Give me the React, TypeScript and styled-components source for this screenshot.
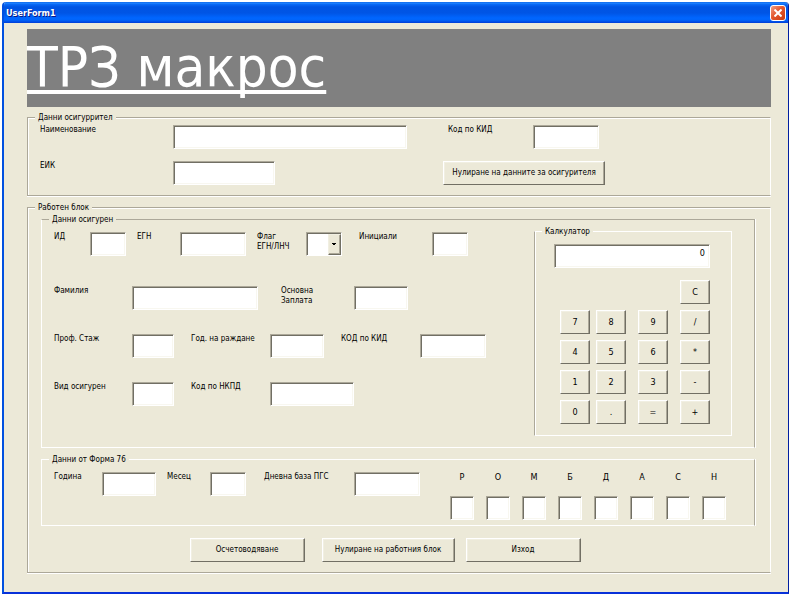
import React from "react";
import styled, { createGlobalStyle } from "styled-components";

const face = "#ece9d8";
const shade = "#aca899";
const dark = "#716f64";

const GlobalStyle = createGlobalStyle`
  * { box-sizing: border-box; }
  body { margin: 0; background: #fff; }
  body, button, input, select {
    font-family: "DejaVu Sans Condensed", "DejaVu Sans", sans-serif;
    font-stretch: condensed;
    font-size: 8px;
    line-height: 10px;
    color: #000;
  }
`;

const Page = styled.div`
  padding: 2px 0 1px 2px;
`;

const Window = styled.div`
  border: solid;
  border-width: 0 1px 2px 2px;
  border-color: #0831d9 #001ea0 #0831d9 #0050e0;
  border-radius: 4px 4px 0 0;
  background: ${face};
  overflow: hidden;
`;

const TitleBar = styled.header`
  display: flex;
  align-items: center;
  justify-content: space-between;
  height: 21px;
  padding: 0 2px;
  background: linear-gradient(#0058e6 0, #2a8dff 1px, #0a6cf8 2px, #0054e3 5px, #0055e5 11px, #0066ff 16px, #0064fa 18px, #003dd7 21px);
`;

const Caption = styled.span`
  font-weight: bold;
  font-size: 9px;
  color: #fff;
  text-shadow: 1px 1px #0a1883;
`;

const CloseButton = styled.button`
  display: grid;
  place-items: center;
  width: 16px;
  height: 16px;
  padding: 0;
  border: 1px solid #fff;
  border-radius: 3px;
  background: linear-gradient(135deg, #f0a088, #e4572e 45%, #c83a10);
`;

const Body = styled.main`
  padding: 6px 17px 19px 23px;
`;

const Banner = styled.h1`
  height: 78px;
  margin: 0 0 10px;
  background: #808080;
  color: #fff;
  font-size: 56px;
  line-height: 76px;
  font-weight: normal;
  text-decoration: underline;
  text-decoration-thickness: 4px;
  text-underline-offset: 4px;
  text-decoration-skip-ink: none;
  white-space: nowrap;
`;

const Frame = styled.fieldset`
  position: relative;
  min-width: 0;
  margin: 0;
  padding: 0;
  border: 1px solid;
  border-color: ${shade} #fff ${shade} ${shade};
  box-shadow: inset 1px 1px #fff, 0 1px #fff;
`;

const Legend = styled.legend`
  position: absolute;
  top: -5px;
  left: 7px;
  padding: 0 3px;
  background: ${face};
  white-space: nowrap;
`;

const EmployerFrame = styled(Frame)`
  display: grid;
  grid-template-columns: 133px 270px 90px 1fr;
  row-gap: 12px;
  padding: 7px 12px 10px;
  margin-bottom: 11px;
`;

const WorkFrame = styled(Frame)`
  padding: 11px 15px 10px 13px;
`;

const PersonFrame = styled(Frame)`
  display: flex;
  justify-content: space-between;
  padding: 11px 22px 11px 12px;
  margin-bottom: 11px;
  border-color: ${shade} ${shade} #fff #fff;
  box-shadow: 1px 0 #fff;
`;

const FormFrame = styled(Frame)`
  display: flex;
  padding: 12px 28px 5px 12px;
  margin-bottom: 12px;
  border-color: #fff ${shade} #fff #fff;
  box-shadow: 1px 0 #fff;
`;

const CalcFrame = styled(Frame)`
  align-self: flex-start;
  padding: 12px 21px 11px 19px;
  border-color: #fff #fff #fff ${shade};
  box-shadow: inset 1px 0 #fff;
`;

const Label = styled.label<{ $width?: number; $indent?: number }>`
  flex: none;
  width: ${(p) => (p.$width ? `${p.$width}px` : "auto")};
  padding-left: ${(p) => p.$indent ?? 0}px;
  white-space: pre-line;
`;

const TextBox = styled.input<{ $width: number }>`
  flex: none;
  width: ${(p) => p.$width}px;
  height: 24px;
  padding: 2px 4px;
  border: 1px solid;
  border-color: ${shade} #fff #fff ${shade};
  border-radius: 0;
  background: #fff;
  box-shadow: inset 1px 1px ${dark}, inset -1px -1px #f8f7f0;
  outline: none;
`;

const Combo = styled.div`
  display: flex;
  position: relative;
  width: 36px;
  height: 24px;
`;

const Select = styled.select`
  appearance: none;
  width: 100%;
  height: 100%;
  padding: 2px;
  border: 1px solid;
  border-color: ${shade} #fff #fff ${shade};
  border-radius: 0;
  background: #fff;
  box-shadow: inset 1px 1px ${dark};
  outline: none;
`;

const ComboArrow = styled.span`
  position: absolute;
  top: 2px;
  right: 1px;
  bottom: 1px;
  display: grid;
  place-items: center;
  width: 13px;
  border: 1px solid;
  border-color: #f1efe2 ${dark} ${dark} #f1efe2;
  background: ${face};
  box-shadow: inset -1px -1px ${shade};
  pointer-events: none;
`;

const PushButton = styled.button<{ $width: number }>`
  width: ${(p) => p.$width}px;
  height: 24px;
  padding: 0;
  border: 1px solid;
  border-color: #fff ${dark} ${dark} #fff;
  border-radius: 0;
  background: ${face};
  box-shadow: inset -1px 0 ${shade}, inset 1px 1px #f1efe2;
  white-space: nowrap;
`;

const WideButton = styled(PushButton)`
  grid-column: 3 / span 2;
`;

const Rows = styled.div`
  display: grid;
  align-content: start;
  row-gap: 24px;
  padding-top: 1px;
`;

const Row = styled.div<{ $after?: number }>`
  display: flex;
  margin-bottom: ${(p) => p.$after ?? 0}px;
`;

const Pair = styled.div<{ $lead?: number }>`
  display: flex;
  margin-left: ${(p) => p.$lead ?? 0}px;
`;

const Display = styled(TextBox)`
  display: block;
  margin-bottom: 12px;
  padding: 3px 4px 9px;
  font-size: 9px;
  text-align: right;
`;

const Keys = styled.div`
  display: grid;
  grid-template-columns: 36px 42px 42px 30px;
  row-gap: 6px;
  margin-left: 6px;
`;

const Key = styled(PushButton)`
  font-size: 9px;
`;

const ClearKey = styled(Key)`
  grid-column: 4;
`;

const DayGrid = styled.div`
  display: flex;
  gap: 12px;
  margin-left: auto;
`;

const Day = styled.label`
  display: grid;
  grid-template-rows: 24px 24px;
  justify-items: center;
  font-size: 9px;
`;

const Actions = styled.div`
  display: flex;
  justify-content: center;
  padding-right: 26px;
`;

const ActionButton = styled(PushButton)<{ $lead?: number }>`
  margin-left: ${(p) => p.$lead ?? 0}px;
`;

type FieldSpec = {
  id: string;
  text: string;
  label: number;
  width: number;
  lead?: number;
  combo?: boolean;
};

const personRows: FieldSpec[][] = [
  [
    { id: "pid", text: "ИД", label: 36, width: 36 },
    { id: "egn", text: "ЕГН", label: 43, width: 66, lead: 11 },
    { id: "flag", text: "Флаг\nЕГН/ЛНЧ", label: 49, width: 36, lead: 11, combo: true },
    { id: "initials", text: "Инициали", label: 73, width: 36, lead: 17 },
  ],
  [
    { id: "family", text: "Фамилия", label: 78, width: 126 },
    { id: "salary", text: "Основна\nЗаплата", label: 73, width: 54, lead: 23 },
  ],
  [
    { id: "service", text: "Проф. Стаж", label: 78, width: 42 },
    { id: "birth", text: "Год. на раждане", label: 79, width: 54, lead: 17 },
    { id: "kid", text: "КОД по КИД", label: 79, width: 66, lead: 17 },
  ],
  [
    { id: "kind", text: "Вид осигурен", label: 78, width: 42 },
    { id: "nkpd", text: "Код по НКПД", label: 79, width: 84, lead: 17 },
  ],
];

const formFields: FieldSpec[] = [
  { id: "year", text: "Година", label: 48, width: 54 },
  { id: "month", text: "Месец", label: 43, width: 36, lead: 11 },
  { id: "base", text: "Дневна база ПГС", label: 90, width: 66, lead: 18 },
];

const keys = ["7", "8", "9", "/", "4", "5", "6", "*", "1", "2", "3", "-", "0", ".", "=", "+"];
const days = ["Р", "О", "М", "Б", "Д", "А", "С", "Н"];

function Field({ id, text, label, width, lead, combo }: FieldSpec) {
  return (
    <Pair $lead={lead}>
      <Label htmlFor={id} $width={label}>{text}</Label>
      {combo ? (
        <Combo>
          <Select id={id} defaultValue="">
            <option value="" />
          </Select>
          <ComboArrow>
            <svg width="5" height="3" viewBox="0 0 5 3" shapeRendering="crispEdges">
              <path d="M0 0h4v1H3v1H1V1H0z" />
            </svg>
          </ComboArrow>
        </Combo>
      ) : (
        <TextBox id={id} $width={width} />
      )}
    </Pair>
  );
}

export default function App() {
  return (
    <Page>
      <GlobalStyle />
      <Window>
        <TitleBar>
          <Caption>UserForm1</Caption>
          <CloseButton aria-label="Close">
            <svg width="8" height="8" viewBox="0 0 8 8">
              <path d="M0.5 0.5l7 7M7.5 0.5l-7 7" stroke="#fff" strokeWidth="2" />
            </svg>
          </CloseButton>
        </TitleBar>
        <Body>
          <Banner>ТРЗ макрос</Banner>
          <EmployerFrame>
            <Legend>Данни осигуррител</Legend>
            <Label htmlFor="name">Наименование</Label>
            <TextBox id="name" $width={234} />
            <Label htmlFor="kid-code" $indent={5}>Код по КИД</Label>
            <TextBox id="kid-code" $width={66} />
            <Label htmlFor="eik">ЕИК</Label>
            <TextBox id="eik" $width={102} />
            <WideButton $width={162}>Нулиране на данните за осигурителя</WideButton>
          </EmployerFrame>
          <WorkFrame>
            <Legend>Работен блок</Legend>
            <PersonFrame>
              <Legend>Данни осигурен</Legend>
              <Rows>
                {personRows.map((row, i) => (
                  <Row key={row[0].id} $after={i === 0 ? 6 : 0}>
                    {row.map((f) => <Field key={f.id} {...f} />)}
                  </Row>
                ))}
              </Rows>
              <CalcFrame>
                <Legend>Калкулатор</Legend>
                <Display aria-label="Калкулатор" $width={156} defaultValue="0" />
                <Keys>
                  <ClearKey $width={30}>C</ClearKey>
                  {keys.map((k) => <Key key={k} $width={30}>{k}</Key>)}
                </Keys>
              </CalcFrame>
            </PersonFrame>
            <FormFrame>
              <Legend>Данни от Форма 76</Legend>
              {formFields.map((f) => <Field key={f.id} {...f} />)}
              <DayGrid>
                {days.map((d) => (
                  <Day key={d}>
                    {d}
                    <TextBox $width={24} />
                  </Day>
                ))}
              </DayGrid>
            </FormFrame>
            <Actions>
              <ActionButton $width={115}>Осчетоводяване</ActionButton>
              <ActionButton $width={133} $lead={17}>Нулиране на работния блок</ActionButton>
              <ActionButton $width={115} $lead={11}>Изход</ActionButton>
            </Actions>
          </WorkFrame>
        </Body>
      </Window>
    </Page>
  );
}
